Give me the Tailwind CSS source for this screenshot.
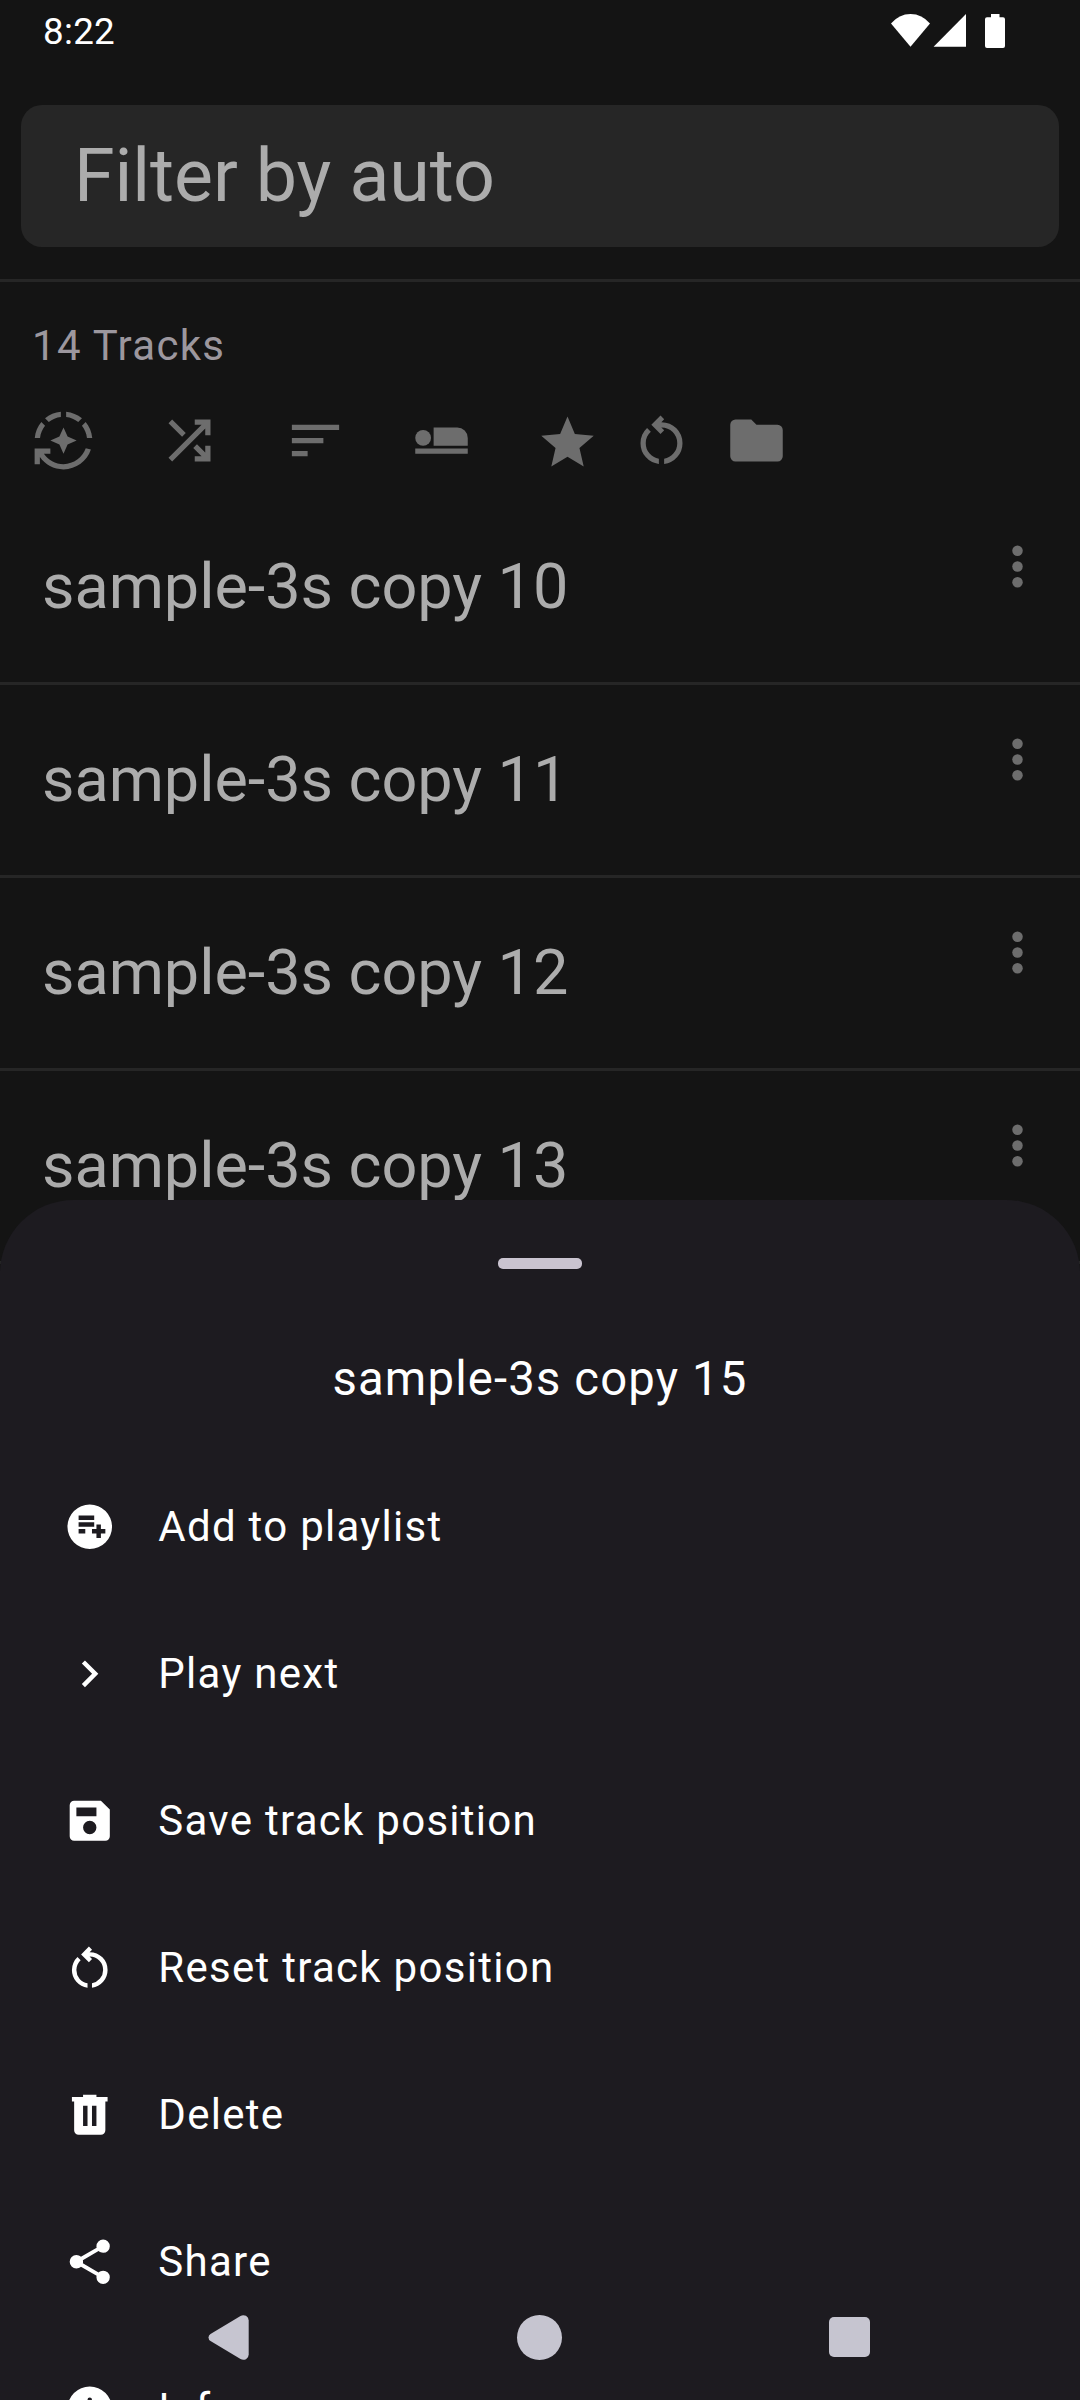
<!DOCTYPE html>
<html lang="en">
<head>
<meta charset="utf-8">
<title>Tracks</title>
<script src="https://cdn.jsdelivr.net/npm/@tailwindcss/browser@4"></script>
</head>
<body class="bg-[#141414]">
<div class="relative w-[1080px] h-[2400px] overflow-hidden bg-[#141414] font-['Roboto',sans-serif] text-[#acacac]">

  <!-- Status bar -->
  <header class="flex h-[62px] justify-between pl-[43px] pr-[75px] text-white">
    <span class="text-[36.75px] leading-[64px] tracking-[0.3px]">8:22</span>
    <svg class="mt-[14px] h-[34px] w-[114px]" viewBox="0 0 114 34" fill="currentColor">
      <path d="M0 9.500Q8 0 19.500 0T39 9.500L19.500 32.700Z"/>
      <path d="M42.600 32.700 75 0V32.700Z"/>
      <path d="M100 0h8.500v3.300h3.500q2 0 2 2V32q0 2-2 2H96q-2 0-2-2V5.300q0-2 2-2h4Z"/>
    </svg>
  </header>

  <!-- Filter field -->
  <div class="mx-[21px] mt-[43px] flex h-[142px] items-center rounded-[21px] bg-[#262626] pt-[2px] pl-[53px] text-[73.5px] leading-none tracking-[-0.1px]">Filter by auto</div>
  <div class="mt-8 h-[3px] bg-[#262626]"></div>

  <h2 class="mt-[38px] pl-[32px] text-[42px] leading-[52px] tracking-[1.31px] text-[#9c979e]">14 Tracks</h2>

  <!-- Toolbar -->
  <div class="mt-[37px] flex h-[63px] pl-8 text-[#6d6d6d]">
    <svg class="size-[63px]" viewBox="0 0 24 24" fill="currentColor"><path d="M19.030 3.560c-1.670-1.390-3.740-2.300-6.030-2.510v2.010c1.730.190 3.310.880 4.610 1.920l1.420-1.420zM11 3.060V1.050c-2.290.200-4.360 1.120-6.030 2.510l1.420 1.420C7.690 3.940 9.270 3.250 11 3.060zM4.980 6.390 3.560 4.970C2.170 6.640 1.260 8.710 1.050 11h2.010c.190-1.730.880-3.310 1.920-4.610zM20.940 11h2.010c-.210-2.290-1.120-4.360-2.510-6.030l-1.420 1.420c1.040 1.300 1.730 2.880 1.920 4.610zM7 12l3.440 1.560L12 17l1.560-3.440L17 12l-3.440-1.560L12 7l-1.560 3.440zM12 21c-3.110 0-5.850-1.590-7.460-4H7v-2H1v6h2v-2.700c1.990 2.840 5.270 4.700 9 4.700 4.870 0 9-3.170 10.440-7.560l-1.960-.450C19.250 18.480 15.920 21 12 21z"/></svg>
    <svg class="ml-[63px] size-[63px]" viewBox="0 -960 960 960" fill="currentColor"><path d="M560-160v-80h104L537-367l57-57 126 126v-102h80v240H560Zm-344 0-56-56 504-504H560v-80h240v240h-80v-104L216-160Zm151-377L160-744l56-56 207 207-56 56Z"/></svg>
    <svg class="ml-[63px] size-[63px]" viewBox="0 0 24 24" fill="currentColor"><path d="M3 18h6v-2H3v2zM3 6v2h18V6H3zm0 7h12v-2H3v2z"/></svg>
    <svg class="ml-[63px] size-[63px]" viewBox="0 0 24 24" fill="currentColor"><circle cx="5" cy="11" r="3"/><path d="M9 7h9a4 4 0 0 1 4 4v3H9ZM2 15h20v2H2Z"/></svg>
    <svg class="ml-[63px] size-[63px]" viewBox="0 -960 960 960" fill="currentColor"><path d="m233-84 65-281L80-554l288-25 112-265 112 265 288 25-218 189 65 281-247-149Z"/></svg>
    <svg class="ml-[31px] size-[63px]" viewBox="0 -960 960 960" fill="currentColor"><path d="M440-122q-121-15-200.500-105.500T160-440q0-66 26-126.500T260-672l57 57q-38 34-57.500 79T240-440q0 88 56 155.500T440-202v80Zm80 0v-80q87-16 143.500-83T720-440q0-100-70-170t-170-70h-3l44 44-56 56-140-140 140-140 56 56-44 44h3q134 0 227 93t93 227q0 121-79.500 211.500T520-122Z"/></svg>
    <svg class="ml-8 size-[63px]" viewBox="0 -960 960 960" fill="currentColor"><path d="M160-160q-33 0-56.500-23.500T80-240v-480q0-33 23.500-56.500T160-800h240l80 80h320q33 0 56.500 23.500T880-640v400q0 33-23.500 56.500T800-160H160Z"/></svg>
  </div>

  <!-- Track list -->
  <ul class="mt-5">
    <li class="flex h-[193px] items-center justify-between border-b-[3px] border-[#262626] pl-[42px] pr-[31px] text-[63px] leading-none tracking-[-0.06px]"><span class="mb-[2px]">sample-3s copy 10</span>
      <svg class="mb-[41px] size-[63px] text-[#6d6d6d]" viewBox="0 0 24 24" fill="currentColor"><circle cx="12" cy="6" r="2"/><circle cx="12" cy="12" r="2"/><circle cx="12" cy="18" r="2"/></svg></li>
    <li class="flex h-[193px] items-center justify-between border-b-[3px] border-[#262626] pl-[42px] pr-[31px] text-[63px] leading-none tracking-[-0.06px]"><span class="mb-[2px]">sample-3s copy 11</span>
      <svg class="mb-[41px] size-[63px] text-[#6d6d6d]" viewBox="0 0 24 24" fill="currentColor"><circle cx="12" cy="6" r="2"/><circle cx="12" cy="12" r="2"/><circle cx="12" cy="18" r="2"/></svg></li>
    <li class="flex h-[193px] items-center justify-between border-b-[3px] border-[#262626] pl-[42px] pr-[31px] text-[63px] leading-none tracking-[-0.06px]"><span class="mb-[2px]">sample-3s copy 12</span>
      <svg class="mb-[41px] size-[63px] text-[#6d6d6d]" viewBox="0 0 24 24" fill="currentColor"><circle cx="12" cy="6" r="2"/><circle cx="12" cy="12" r="2"/><circle cx="12" cy="18" r="2"/></svg></li>
    <li class="flex h-[193px] items-center justify-between border-b-[3px] border-[#262626] pl-[42px] pr-[31px] text-[63px] leading-none tracking-[-0.06px]"><span class="mb-[2px]">sample-3s copy 13</span>
      <svg class="mb-[41px] size-[63px] text-[#6d6d6d]" viewBox="0 0 24 24" fill="currentColor"><circle cx="12" cy="6" r="2"/><circle cx="12" cy="12" r="2"/><circle cx="12" cy="18" r="2"/></svg></li>
  </ul>

  <!-- Bottom sheet -->
  <section class="absolute inset-x-0 top-[1200px] h-[1200px] overflow-hidden rounded-t-[73.5px] bg-[#1d1b20] pt-[58px] text-white">
    <div class="mx-auto h-[11px] w-[84px] rounded-[5px] bg-[#cac4d0]"></div>
    <h3 class="mt-[80px] text-center text-[47.25px] leading-[60px] tracking-[1.15px]">sample-3s copy 15</h3>
    <ul class="mt-[44px] text-[42px] leading-none tracking-[1.28px]">
      <li class="flex h-[147px] items-center gap-[42px] pl-[62.8px]">
        <svg class="size-[53.5px]" viewBox="0 0 960 960" fill="currentColor"><path fill-rule="evenodd" d="M480 80a400 400 0 1 1 0 800a400 400 0 1 1 0-800ZM280 280v80h280v-80ZM280 400v80h280v-80ZM280 520v80h120v-80ZM600 440v80h-80v80h80v80h80v-80h80v-80h-80v-80Z"/></svg>
        <span>Add to playlist</span></li>
      <li class="flex h-[147px] items-center gap-[42px] pl-[62.8px]">
        <svg class="size-[53.5px]" viewBox="-18 -960 960 960" fill="currentColor"><path d="M504-480 320-664l56-56 240 240-240 240-56-56 184-184Z"/></svg>
        <span>Play next</span></li>
      <li class="flex h-[147px] items-center gap-[42px] pl-[62.8px]">
        <svg class="size-[53.5px]" viewBox="0 -960 960 960" fill="currentColor"><path d="M840-680v480q0 33-23.500 56.500T760-120H200q-33 0-56.500-23.500T120-200v-560q0-33 23.500-56.500T200-840h480l160 160ZM480-240q50 0 85-35t35-85q0-50-35-85t-85-35q-50 0-85 35t-35 85q0 50 35 85t85 35ZM240-560h360v-160H240v160Z"/></svg>
        <span>Save track position</span></li>
      <li class="flex h-[147px] items-center gap-[42px] pl-[62.8px]">
        <svg class="size-[53.5px]" viewBox="0 -960 960 960" fill="currentColor"><path d="M440-122q-121-15-200.500-105.500T160-440q0-66 26-126.500T260-672l57 57q-38 34-57.500 79T240-440q0 88 56 155.500T440-202v80Zm80 0v-80q87-16 143.500-83T720-440q0-100-70-170t-170-70h-3l44 44-56 56-140-140 140-140 56 56-44 44h3q134 0 227 93t93 227q0 121-79.500 211.500T520-122Z"/></svg>
        <span>Reset track position</span></li>
      <li class="flex h-[147px] items-center gap-[42px] pl-[62.8px]">
        <svg class="size-[53.5px]" viewBox="0 -960 960 960" fill="currentColor"><path d="M280-120q-33 0-56.500-23.500T200-200v-520h-40v-80h200v-40h240v40h200v80h-40v520q0 33-23.500 56.500T680-120H280Zm80-160h80v-360h-80v360Zm160 0h80v-360h-80v360Z"/></svg>
        <span>Delete</span></li>
      <li class="flex h-[147px] items-center gap-[42px] pl-[62.8px]">
        <svg class="size-[53.5px]" viewBox="0 -960 960 960" fill="currentColor"><path d="M720-80q-50 0-85-35t-35-85q0-7 1-14.500t3-13.500L322-392q-17 15-38 23.500t-44 8.500q-50 0-85-35t-35-85q0-50 35-85t85-35q23 0 44 8.500t38 23.500l282-164q-2-6-3-13.500t-1-14.500q0-50 35-85t85-35q50 0 85 35t35 85q0 50-35 85t-85 35q-23 0-44-8.500T638-672L356-508q2 6 3 13.500t1 14.500q0 7-1 14.500t-3 13.500l282 164q17-15 38-23.500t44-8.500q50 0 85 35t35 85q0 50-35 85t-85 35Z"/></svg>
        <span>Share</span></li>
      <li class="flex h-[147px] items-center gap-[42px] pl-[62.8px]">
        <svg class="size-[53.5px]" viewBox="0 0 960 960" fill="currentColor"><path fill-rule="evenodd" d="M480 80a400 400 0 1 1 0 800a400 400 0 1 1 0-800ZM480 280a40 40 0 1 0 0 80a40 40 0 1 0 0-80ZM440 440v240h80v-240Z"/></svg>
        <span>Info</span></li>
    </ul>
  </section>

  <!-- System navigation -->
  <nav class="absolute inset-x-0 bottom-0 flex h-[126px] items-center pl-[208px] text-[#c6c5d0]">
    <svg class="h-[45px] w-[41px]" viewBox="0 0 41 45" fill="currentColor"><path d="M2.500 19 32.500 1Q35 -.500 38 .800Q40.700 2.200 40.700 5.500V39.500Q40.700 42.800 38 44.200Q35 45.500 32.500 44L2.500 26Q.500 24.800.500 22.500T2.500 19Z"/></svg>
    <span class="ml-[268px] size-[45px] rounded-full bg-current"></span>
    <span class="ml-[267.3px] size-[40.4px] rounded-[5px] bg-current"></span>
  </nav>
</div>
</body>
</html>
